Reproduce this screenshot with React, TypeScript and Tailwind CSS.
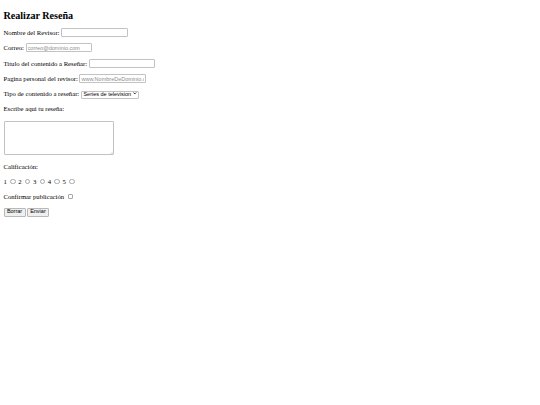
import React from "react";

const fieldClass =
  "h-[8.6px] w-[66.5px] rounded-[1px] border border-[#c2c2c2] bg-white px-[1px] font-['Liberation_Sans',sans-serif] text-[5.5px] leading-none text-black placeholder:text-[#8c8c8c] outline-none";

const buttonClass =
  "h-[8.6px] rounded-[1px] border border-[#b8b8b8] bg-[#efefef] px-[2.4px] font-['Liberation_Sans',sans-serif] text-[5.5px] leading-none text-black";

const TextRow = ({
  label,
  placeholder,
  type = "text",
  className = "",
}: {
  label: string;
  placeholder?: string;
  type?: string;
  className?: string;
}) => (
  <div className={`flex h-[8.6px] items-center ${className}`}>
    <label className="leading-[7.5px]">{label}</label>
    <input type={type} placeholder={placeholder} className={`ml-[1.7px] ${fieldClass}`} />
  </div>
);

export default function App() {
  return (
    <div className="min-h-screen bg-white pl-[3.5px] pt-[9.5px] font-['Liberation_Serif',serif] text-[6.68px] text-black">
      <h2 className="text-[10.1px] font-bold leading-[11px]">Realizar Reseña</h2>

      <form onSubmit={(e) => e.preventDefault()}>
        <TextRow label="Nombre del Revisor:" className="mt-[7.5px]" />
        <TextRow label="Correo:" type="email" placeholder="correo@dominio.com" className="mt-[6.9px]" />
        <TextRow label="Titulo del contenido a Reseñar:" className="mt-[6.9px]" />
        <TextRow
          label="Pagina personal del revisor:"
          type="url"
          placeholder="www.NombreDeDominio.com"
          className="mt-[6.9px]"
        />

        <div className="mt-[6.9px] flex h-[8.6px] items-center">
          <label className="leading-[7.5px]">Tipo de contenido a reseñar:</label>
          <div className="relative ml-[1.7px]">
            <select className="h-[8.6px] w-[58px] appearance-none rounded-[1px] border border-[#c2c2c2] bg-white pl-[1.5px] font-['Liberation_Sans',sans-serif] text-[5.5px] leading-none text-black outline-none">
              <option>Series de television</option>
              <option>Peliculas</option>
              <option>Libros</option>
            </select>
            <svg
              viewBox="0 0 10 6"
              className="pointer-events-none absolute right-[2px] top-[3.1px] h-[2.4px] w-[3.6px]"
            >
              <path d="M1 1l4 4 4-4" fill="none" stroke="#111" strokeWidth="2.4" />
            </svg>
          </div>
        </div>

        <p className="mt-[6.4px] leading-[7.5px]">Escribe aqui tu reseña:</p>

        <div className="relative mt-[8.5px] h-[34px] w-[110.5px]">
          <textarea className="block h-[34px] w-[110.5px] resize-none rounded-[1px] border border-[#c2c2c2] bg-white outline-none" />
          <svg viewBox="0 0 6 6" className="pointer-events-none absolute bottom-[1px] right-[1px] h-[3px] w-[3px]">
            <path d="M1 6L6 1M3.5 6L6 3.5" stroke="#a8a8a8" strokeWidth="0.8" />
          </svg>
        </div>

        <p className="mt-[8.5px] leading-[7.5px]">Calificación:</p>

        <div className="mt-[7px] flex h-[7.5px] items-center leading-[7.5px]">
          {[1, 2, 3, 4, 5].map((n) => (
            <React.Fragment key={n}>
              <span>{n}</span>
              <input
                type="radio"
                name="calificacion"
                value={n}
                className="ml-[3.4px] mr-[2.6px] h-[5.4px] w-[5.4px] appearance-none rounded-full border border-[#a8a8a8] bg-white"
              />
            </React.Fragment>
          ))}
        </div>

        <div className="mt-[7.5px] flex h-[7.5px] items-center leading-[7.5px]">
          <label>Confirmar publicación</label>
          <input
            type="checkbox"
            className="ml-[3.6px] h-[5.4px] w-[5.4px] appearance-none rounded-[1px] border border-[#a8a8a8] bg-white"
          />
        </div>

        <div className="mt-[7.5px] flex gap-[1.2px]">
          <button type="reset" className={buttonClass}>
            Borrar
          </button>
          <button type="submit" className={buttonClass}>
            Enviar
          </button>
        </div>
      </form>
    </div>
  );
}
